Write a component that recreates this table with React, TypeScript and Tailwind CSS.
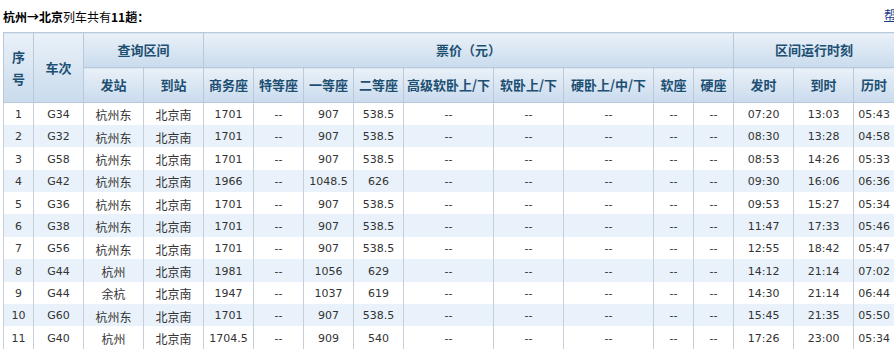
import React from "react";

const rows = [
  ["1", "G34", "杭州东", "北京南", "1701", "907", "538.5", "07:20", "13:03", "05:43"],
  ["2", "G32", "杭州东", "北京南", "1701", "907", "538.5", "08:30", "13:28", "04:58"],
  ["3", "G58", "杭州东", "北京南", "1701", "907", "538.5", "08:53", "14:26", "05:33"],
  ["4", "G42", "杭州东", "北京南", "1966", "1048.5", "626", "09:30", "16:06", "06:36"],
  ["5", "G36", "杭州东", "北京南", "1701", "907", "538.5", "09:53", "15:27", "05:34"],
  ["6", "G38", "杭州东", "北京南", "1701", "907", "538.5", "11:47", "17:33", "05:46"],
  ["7", "G56", "杭州东", "北京南", "1701", "907", "538.5", "12:55", "18:42", "05:47"],
  ["8", "G44", "杭州", "北京南", "1981", "1056", "629", "14:12", "21:14", "07:02"],
  ["9", "G44", "余杭", "北京南", "1947", "1037", "619", "14:30", "21:14", "06:44"],
  ["10", "G60", "杭州东", "北京南", "1701", "907", "538.5", "15:45", "21:35", "05:50"],
  ["11", "G40", "杭州", "北京南", "1704.5", "909", "540", "17:26", "23:00", "05:34"],
];

const widths = [30, 50, 60, 60, 50, 50, 50, 50, 90, 70, 90, 40, 40, 60, 60, 41];

const th = "border border-[#b9c9d9] bg-gradient-to-b from-[#eaf1f8] to-[#c9dbed] text-[#1d4f73] font-bold text-[13px] text-center align-middle p-0";
const td = "border-x border-[#c4cfda] text-center align-middle pt-[3px] pb-0 px-0 text-[11px] text-[#333]";
const cjk = { fontFamily: '"Noto Sans CJK SC", sans-serif' };

export default function App() {
  return (
    <div className="w-[894px] h-[355px] overflow-hidden bg-white" style={{ fontFamily: '"DejaVu Sans", Tahoma, "Noto Sans CJK SC", sans-serif' }}>
      <div className="flex items-center justify-between h-[32px] pl-[3px] pt-[2px] text-[12px] text-black" style={cjk}>
        <div>
          <b>杭州→北京</b>列车共有<b>11趟：</b>
        </div>
        <a className="text-[#1a3c8c] underline text-[12px] w-[10px] overflow-hidden whitespace-nowrap mt-[-4px]">帮助</a>
      </div>
      <table className="ml-[3px] border-collapse table-fixed w-[891px]">
        <colgroup>
          {widths.map((w, i) => (
            <col key={i} style={{ width: w }} />
          ))}
        </colgroup>
        <thead style={cjk}>
          <tr className="h-[35px]">
            <th rowSpan={2} className={th + " leading-[22px]"}>序<br />号</th>
            <th rowSpan={2} className={th}>车次</th>
            <th colSpan={2} className={th}>查询区间</th>
            <th colSpan={9} className={th}>票价（元）</th>
            <th colSpan={3} className={th}>区间运行时刻</th>
          </tr>
          <tr className="h-[35px]">
            {["发站", "到站", "商务座", "特等座", "一等座", "二等座", "高级软卧上/下", "软卧上/下", "硬卧上/中/下", "软座", "硬座", "发时", "到时", "历时"].map((h) => (
              <th key={h} className={th + " whitespace-nowrap"}>{h}</th>
            ))}
          </tr>
        </thead>
        <tbody>
          {rows.map((r, i) => (
            <tr key={i} className={"h-[22.4px] " + (i % 2 === 1 ? "bg-[#e9f2fa]" : "bg-white")}>
              <td className={td}>{r[0]}</td>
              <td className={td}>{r[1]}</td>
              <td className={td + " text-[12px]"} style={cjk}>{r[2]}</td>
              <td className={td + " text-[12px]"} style={cjk}>{r[3]}</td>
              <td className={td}>{r[4]}</td>
              <td className={td}>--</td>
              <td className={td}>{r[5]}</td>
              <td className={td}>{r[6]}</td>
              <td className={td}>--</td>
              <td className={td}>--</td>
              <td className={td}>--</td>
              <td className={td}>--</td>
              <td className={td}>--</td>
              <td className={td}>{r[7]}</td>
              <td className={td}>{r[8]}</td>
              <td className={td}>{r[9]}</td>
            </tr>
          ))}
        </tbody>
      </table>
    </div>
  );
}
